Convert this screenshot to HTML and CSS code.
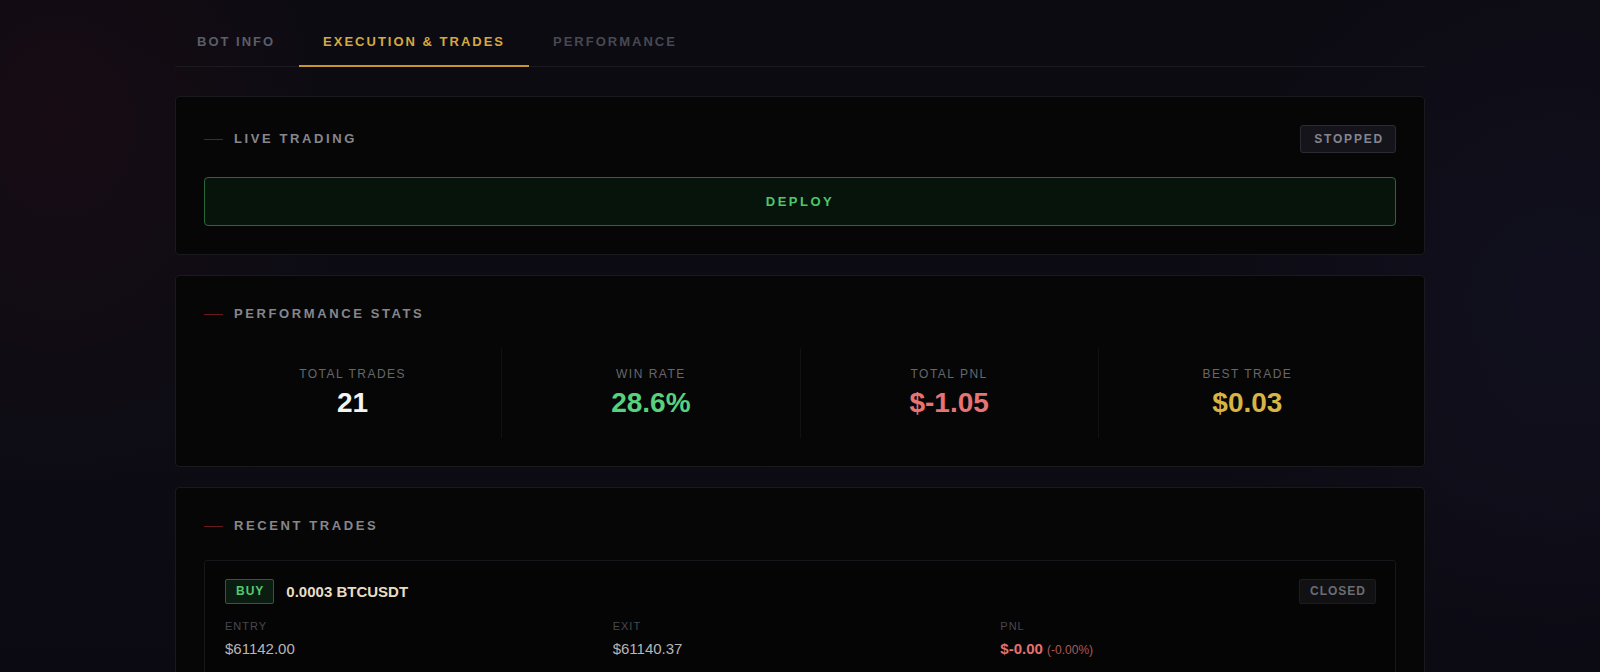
FILE: index.html
```html
<!DOCTYPE html>
<html lang="en">
<head>
<meta charset="utf-8">
<title>Execution &amp; Trades</title>
<link rel="stylesheet" href="styles.css">
</head>
<body>
<div class="page">
  <div class="container">
    <nav class="tabs">
      <div class="tab tab-dim">BOT INFO</div>
      <div class="tab tab-active">EXECUTION &amp; TRADES</div>
      <div class="tab tab-dimmer">PERFORMANCE</div>
    </nav>

    <section class="card">
      <div class="card-head">
        <div class="card-title"><span class="dash"></span>LIVE TRADING</div>
        <span class="status">STOPPED</span>
      </div>
      <button class="deploy">DEPLOY</button>
    </section>

    <section class="card">
      <div class="card-head">
        <div class="card-title"><span class="dash"></span>PERFORMANCE STATS</div>
      </div>
      <div class="stats">
        <div class="stat">
          <div class="stat-label">TOTAL TRADES</div>
          <div class="stat-value v-white">21</div>
        </div>
        <div class="stat">
          <div class="stat-label">WIN RATE</div>
          <div class="stat-value v-green">28.6%</div>
        </div>
        <div class="stat">
          <div class="stat-label">TOTAL PNL</div>
          <div class="stat-value v-red">$-1.05</div>
        </div>
        <div class="stat">
          <div class="stat-label">BEST TRADE</div>
          <div class="stat-value v-gold">$0.03</div>
        </div>
      </div>
    </section>

    <section class="card">
      <div class="card-head">
        <div class="card-title"><span class="dash"></span>RECENT TRADES</div>
      </div>
      <div class="trade">
        <div class="trade-top">
          <div class="trade-name">
            <span class="side">BUY</span>
            <span class="pair">0.0003 BTCUSDT</span>
          </div>
          <span class="closed">CLOSED</span>
        </div>
        <div class="trade-grid">
          <div>
            <div class="t-label">ENTRY</div>
            <div class="t-value">$61142.00</div>
          </div>
          <div>
            <div class="t-label">EXIT</div>
            <div class="t-value">$61140.37</div>
          </div>
          <div>
            <div class="t-label">PNL</div>
            <div class="t-value"><span class="pnl">$-0.00</span> <span class="pnl-pct">(-0.00%)</span></div>
          </div>
        </div>
      </div>
    </section>
  </div>
</div>
</body>
</html>
```

FILE: styles.css
```css
* { box-sizing: border-box; }
html, body { margin: 0; padding: 0; }
body {
  font-family: "Liberation Sans", Arial, Helvetica, sans-serif;
  background: #0c0b11;
  color: #cfcfcf;
  height: 672px;
  overflow: hidden;
}
.page {
  min-height: 672px;
  padding-top: 18px;
  background:
    radial-gradient(ellipse 420px 520px at 60px 120px, rgba(60, 14, 24, 0.22), transparent 70%),
    radial-gradient(ellipse 520px 600px at 1560px 300px, rgba(30, 26, 60, 0.25), transparent 70%),
    linear-gradient(180deg, #0c0b12 0%, #0d0c14 60%, #0b0a12 100%);
}
.container {
  width: 1250px;
  margin: 0 auto;
}

/* tabs */
.tabs {
  display: flex;
  border-bottom: 1px solid #1b1a21;
  margin-bottom: 29px;
}
.tab {
  padding: 16px 24px 15px 22px;
  font-size: 13px;
  line-height: 16px;
  font-weight: 700;
  letter-spacing: 2px;
  border-bottom: 2px solid transparent;
  margin-bottom: -1px;
  white-space: nowrap;
}
.tab-active {
  padding-left: 24px;
  color: #d6a93f;
  border-bottom-color: #c8962f;
}
.tab-dim { color: #5d5d67; }
.tab-dimmer { color: #484852; padding-left: 24px; }

/* cards */
.card {
  background: #070607;
  border: 1px solid #1a191e;
  border-radius: 4px;
  padding: 28px;
  margin-bottom: 20px;
}
.card-head {
  display: flex;
  align-items: center;
  justify-content: space-between;
  min-height: 20px;
  margin-bottom: 24px;
}
.card-title {
  display: flex;
  align-items: center;
  font-size: 13px;
  line-height: 20px;
  font-weight: 700;
  letter-spacing: 2.6px;
  color: #86868c;
}
.dash {
  display: inline-block;
  width: 19px;
  height: 1px;
  background: #6a1a1e;
  margin-right: 11px;
}
.status {
  display: inline-block;
  padding: 6px 11px 6px 13px;
  font-size: 12px;
  line-height: 14px;
  font-weight: 700;
  letter-spacing: 1.8px;
  color: #85858f;
  background: #14141a;
  border: 1px solid #2b2b34;
  border-radius: 3px;
}
.deploy {
  display: block;
  width: 100%;
  height: 49px;
  background: #07140b;
  border: 1px solid #2b6638;
  border-radius: 4px;
  color: #4fc56c;
  font-family: inherit;
  font-size: 13px;
  font-weight: 700;
  letter-spacing: 2.5px;
  cursor: pointer;
}

/* stats */
.stats {
  display: grid;
  grid-template-columns: repeat(4, 1fr);
  gap: 1px;
  background: #111114;
}
.stat {
  background: #060606;
  height: 90px;
  display: flex;
  flex-direction: column;
  align-items: center;
  justify-content: center;
  gap: 6px;
}
.stat-label {
  font-size: 12px;
  line-height: 14px;
  letter-spacing: 1.5px;
  color: #66666c;
}
.stat-value {
  font-size: 28px;
  line-height: 32px;
  font-weight: 700;
}
.v-white { color: #f3f3f3; }
.v-green { color: #58d17f; }
.v-red { color: #e87373; }
.v-gold { color: #d8b445; }

/* trades */
.trade {
  background: #060506;
  border: 1px solid #17161b;
  border-radius: 3px;
  padding: 18px 19px 20px 20px;
}
.trade-top {
  display: flex;
  align-items: center;
  justify-content: space-between;
  margin-bottom: 15px;
}
.trade-name {
  display: flex;
  align-items: center;
  gap: 12px;
}
.side {
  display: inline-block;
  padding: 4px 9px 4px 10px;
  font-size: 12px;
  line-height: 15px;
  font-weight: 700;
  letter-spacing: 1px;
  color: #55c872;
  background: #0a1d10;
  border: 1px solid #2a5e37;
  border-radius: 2px;
}
.pair {
  font-size: 15px;
  font-weight: 700;
  color: #e8ddc3;
}
.closed {
  display: inline-block;
  padding: 4px 9px 4px 10px;
  font-size: 12px;
  line-height: 15px;
  font-weight: 700;
  letter-spacing: 1px;
  color: #6c6c74;
  background: #111114;
  border: 1px solid #1c1c22;
  border-radius: 2px;
}
.trade-grid {
  display: grid;
  grid-template-columns: repeat(3, 1fr);
  gap: 12px;
}
.t-label {
  font-size: 11px;
  line-height: 14px;
  letter-spacing: 1px;
  color: #48484e;
  margin-bottom: 7px;
}
.t-value {
  font-size: 15px;
  line-height: 18px;
  color: #b6b6b8;
}
.pnl {
  font-weight: 700;
  color: #e47070;
}
.pnl-pct {
  font-size: 12px;
  color: #a85a5a;
}
```
